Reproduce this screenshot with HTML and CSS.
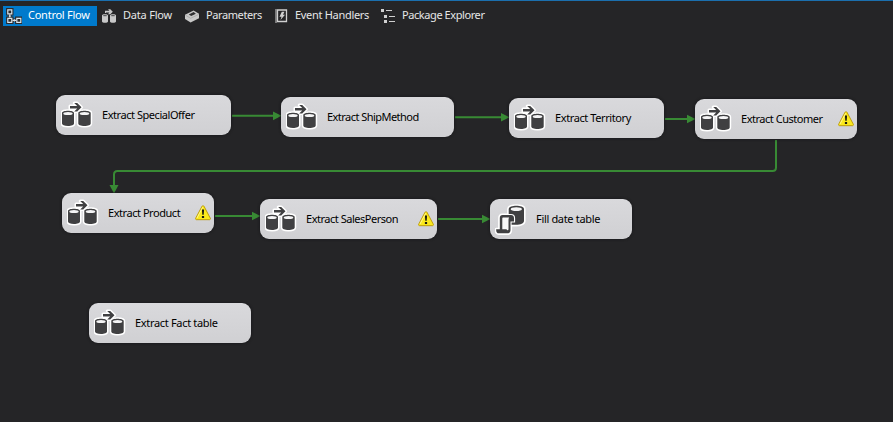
FILE: index.html
```html
<!DOCTYPE html>
<html lang="en">
<head>
<meta charset="utf-8">
<title>Package Designer</title>
<link rel="stylesheet" href="styles.css">
</head>
<body>
<svg class="defs" aria-hidden="true">
  <defs>
    <g id="flow-shape">
      <path d="M1 12v10.500c0 1.500 2.500 2.500 6 2.500s6-1 6-2.500V12c0-3-12-3-12 0zM17.300 12v10.500c0 1.500 2.500 2.500 6.200 2.500s6.200-1 6.200-2.500V12c0-3-12.400-3-12.400 0z"/>
    </g>
    <path id="flow-arrow" d="M9 5h7.200l-3-3h3l4.300 4.200-4.300 4.200h-3l3-3H9z"/>
    <symbol id="flow" viewBox="0 0 32 28">
      <g fill="#fff" stroke="#fff" stroke-width="3" stroke-linejoin="round"><use href="#flow-shape"/><use href="#flow-arrow"/></g>
      <g fill="#404042"><use href="#flow-shape"/><use href="#flow-arrow"/></g>
      <g fill="#f5f5f6"><ellipse cx="7" cy="12.500" rx="4.700" ry="1.600"/><ellipse cx="23.500" cy="12.500" rx="4.800" ry="1.600"/></g>
    </symbol>
    <path id="script-roll" d="M7.500 12H16c1.800 0 3 1.200 3 3v3.500h-3.500V27c0 2-1 3.300-3 3.300H4c-2 0-3-1.500-2.800-4h3.600V15c0-1.700 1-3 2.700-3z"/>
    <path id="script-drum" d="M13.700 6c0-4.300 15.300-4.300 15.300 0v12c0 2.300-3.500 3.800-8 3.800h-7.300z"/>
    <symbol id="script" viewBox="0 0 32 32">
      <g fill="#fff" stroke="#fff" stroke-width="3.200" stroke-linejoin="round"><use href="#script-drum"/><use href="#script-roll"/></g>
      <use href="#script-drum" fill="#404042"/>
      <ellipse cx="21.300" cy="6.200" rx="5.600" ry="1.900" fill="#f5f5f6"/>
      <use href="#script-roll" fill="#404042" stroke="#fff" stroke-width="2.200" paint-order="stroke"/>
      <path d="M8.300 14.500h5.900c-.5.600-.7 1.300-.7 2.300v9.700c-.4 1-1.600 1-2-.3H7.300V15.500c0-.6.400-1 1-1z" fill="#f8f8f8"/>
    </symbol>
    <symbol id="warning" viewBox="0 0 16 16">
      <path d="M7 1.300 .7 13.200c-.4.8.1 1.500.9 1.500h12.800c.8 0 1.300-.7.900-1.500L9 1.300c-.5-.8-1.500-.8-2 0z" fill="#fbe91c" stroke="#b99500" stroke-width=".9"/>
      <path d="M7.600 2.300 2 13" stroke="#fffbb0" stroke-width=".8" fill="none"/>
      <path d="M6.900 4.500h2.200l-.4 5.300H7.300zM6.900 10.900h2.200v2.100H6.900z" fill="#1b1b10"/>
    </symbol>
  </defs>
</svg>
<div class="designer">
  <nav class="tabs">
    <a class="tab tab-control active">
      <svg class="tab-icon" viewBox="0 0 16 16" fill="none" stroke="#d8e5ee" stroke-width="1.200"><path stroke="#2b2b2d" stroke-width="3.400" d="M1.800 1.800h4v4h-4zM1.800 10.300h4v4h-4zM10.800 10.300h4v4h-4zM3.800 6v4M6 12.300h4.500"/><path fill="#2b2b2d" d="M1.800 1.800h4v4h-4zM1.800 10.300h4v4h-4zM10.800 10.300h4v4h-4z"/><path d="M3.800 6.200v3.300M6.500 12.300H10M2.800 8.200h2M8.400 11.200v2.200"/></svg>
      <span>Control Flow</span>
    </a>
    <a class="tab tab-data">
      <svg class="tab-icon" viewBox="0 0 16 16"><g fill="#c8c8c8"><path d="M1 7.400v6c0 1.800 6 1.800 6 0v-6c0-1.500-6-1.500-6 0zM9 7.400v6c0 1.800 6 1.800 6 0v-6c0-1.500-6-1.500-6 0z"/><path d="M4 5V2.800h4.500L7 1.300h2.300l2.500 2.400-2.500 2.500H7l1.400-1.600H5V5z"/></g><path d="M2.300 7.700h3.400M10.300 7.700h3.400" stroke="#454547"/></svg>
      <span>Data Flow</span>
    </a>
    <a class="tab tab-params">
      <svg class="tab-icon" viewBox="0 0 16 16"><path fill="#c8c8c8" d="M1 6.700 9.600 2.500 15 5.800v4.400L6.600 14.500 1 11z"/><path d="m4.800 6.500 4.800-2.400 2.300 1.600-4.700 2.400z" fill="#303032"/><path d="m1.200 7 5.400 3.300 8.200-4" stroke="#929294" stroke-width=".5" fill="none"/></svg>
      <span>Parameters</span>
    </a>
    <a class="tab tab-events">
      <svg class="tab-icon" viewBox="0 0 16 16" fill="none" stroke="#d0d0d0"><path d="M4.500 2h9v11.500h-9z" stroke-width="1.300"/><path d="M3 1.500v13" stroke-width="2" stroke-dasharray="1 1"/><path fill="#d0d0d0" stroke="none" d="M8.800 3.700h2.700L10 6.800h2L7.500 12l1-3.200H6.500z"/></svg>
      <span>Event Handlers</span>
    </a>
    <a class="tab tab-explorer">
      <svg class="tab-icon" viewBox="0 0 16 16" fill="#d0d0d0"><path d="M1 1h3v3H1zM4 7h3v3H4zM4 12h3v3H4zM6 2h6v1H6zM9 8h6v1H9zM9 13h6v1H9z"/></svg>
      <span>Package Explorer</span>
    </a>
  </nav>
  <main class="canvas">
    <svg class="links" viewBox="0 0 893 422">
      <g class="wire"><path d="M232 115.800H274M455 117.200H502M665 119H688M215 216H253M438 219H483M776 140V167.500Q776 171 772.500 171H117.500Q114 171 114 174.500V186"/></g>
      <g class="head"><path d="M273 111.500 281.500 115.800 273 120.200zM501 113 509.500 117.200 501 121.500zM687 114.700 695.500 119 687 123.300zM252 211.700 260.500 216 252 220.300zM482 214.700 490.500 219 482 223.300zM109.500 185 114 193.500 118.500 185z"/></g>
    </svg>
    <div class="node special"><svg class="icon"><use href="#flow"/></svg><span class="label">Extract SpecialOffer</span></div>
    <div class="node ship"><svg class="icon"><use href="#flow"/></svg><span class="label">Extract ShipMethod</span></div>
    <div class="node territory"><svg class="icon"><use href="#flow"/></svg><span class="label">Extract Territory</span></div>
    <div class="node customer"><svg class="icon"><use href="#flow"/></svg><span class="label">Extract Customer</span><svg class="warn"><use href="#warning"/></svg></div>
    <div class="node product"><svg class="icon"><use href="#flow"/></svg><span class="label">Extract Product</span><svg class="warn"><use href="#warning"/></svg></div>
    <div class="node sales"><svg class="icon"><use href="#flow"/></svg><span class="label">Extract SalesPerson</span><svg class="warn"><use href="#warning"/></svg></div>
    <div class="node fill"><svg class="icon icon-script"><use href="#script"/></svg><span class="label">Fill date table</span></div>
    <div class="node fact"><svg class="icon"><use href="#flow"/></svg><span class="label">Extract Fact table</span></div>
  </main>
</div>
</body>
</html>
```
FILE: styles.css
```css
* { box-sizing: border-box; }
body { margin: 0; background: #252527; }
.defs { position: absolute; width: 0; height: 0; }
.designer {
  position: relative;
  width: 893px;
  height: 422px;
  overflow: hidden;
  border-top: 1px solid #1b6fae;
  background: #252527;
}
.tabs {
  display: flex;
  gap: 1px;
  padding: 5px 3px 0;
  font: 11px/20px "Noto Sans", sans-serif;
  color: #e6e6e6;
}
.tab {
  display: flex;
  align-items: center;
  gap: 6px;
  height: 20px;
  padding-left: 3px;
  white-space: nowrap;
}
.tab span { position: relative; top: -1px; }
.tab.active { background: #007acc; color: #fff; }
.tab-icon { width: 16px; height: 16px; flex: none; }
.tab-control { width: 94px; letter-spacing: -0.25px; }
.tab-data { width: 82px; letter-spacing: -0.2px; }
.tab-params { width: 88px; letter-spacing: -0.4px; }
.tab-events { width: 106px; letter-spacing: -0.3px; }
.tab-explorer { letter-spacing: -0.42px; }
.links { position: absolute; left: 0; top: -1px; width: 893px; height: 422px; }
.wire { fill: none; stroke: #388a34; stroke-width: 2; }
.head { fill: #388a34; }
.node {
  position: absolute;
  display: flex;
  align-items: center;
  height: 40px;
  padding: 0 3px 0 5px;
  border-radius: 9px;
  background: linear-gradient(#d9d9dc, #d0d0d3);
  box-shadow: 0 0 3px #151517;
  color: #000;
}
.icon { width: 32px; height: 28px; flex: none; overflow: visible; }
.icon-script { height: 32px; }
.label {
  flex: 1;
  margin-left: 9px;
  font: 11px/16px "Noto Sans", sans-serif;
  white-space: nowrap;
}
.warn { width: 16px; height: 16px; flex: none; }
.special { left: 56px; top: 94px; width: 175px; letter-spacing: -0.45px; }
.ship { left: 281px; top: 96px; width: 173px; letter-spacing: -0.54px; }
.territory { left: 509px; top: 97px; width: 155px; letter-spacing: -0.4px; }
.customer { left: 695px; top: 98px; width: 162px; letter-spacing: -0.48px; }
.product { left: 62px; top: 192px; width: 152px; letter-spacing: -0.45px; }
.sales { left: 260px; top: 198px; width: 177px; letter-spacing: -0.48px; }
.fill { left: 490px; top: 198px; width: 142px; letter-spacing: -0.33px; }
.fact { left: 89px; top: 302px; width: 162px; letter-spacing: -0.32px; }
```
